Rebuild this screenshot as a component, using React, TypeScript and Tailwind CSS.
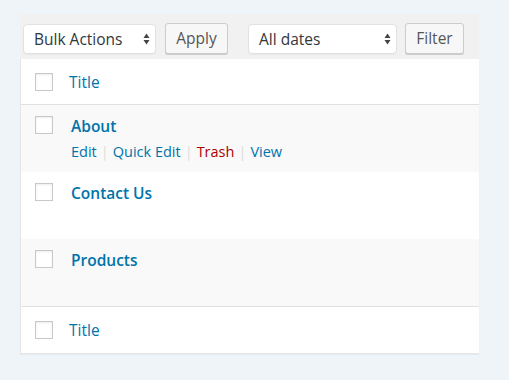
import React from "react";

const font = { fontFamily: '"Open Sans", "Noto Sans", sans-serif' };

function Arrows() {
  return (
    <svg width="7" height="12" viewBox="0 0 7 12" className="shrink-0">
      <path d="M3.5 0.5 L6.5 5 L0.5 5 Z" fill="#444" />
      <path d="M3.5 11.5 L6.5 7 L0.5 7 Z" fill="#444" />
    </svg>
  );
}

function Select({ label, w }: { label: string; w: string }) {
  return (
    <div
      className={`${w} h-[30px] flex items-center justify-between pl-[10px] pr-[5px] bg-white rounded-[4px] border border-[#e2e2e2] shadow-[0_1px_1px_rgba(0,0,0,0.04)] text-[15.5px] text-[#32373c]`}
    >
      <span className="leading-[20px]">{label}</span>
      <Arrows />
    </div>
  );
}

function Button({ label, w }: { label: string; w: string }) {
  return (
    <div
      className={`${w} h-[31px] -mt-[1px] flex items-center justify-center bg-[#f7f7f7] border border-[#cccccc] rounded-[3px] shadow-[0_1px_0_#cccccc] text-[15.5px] text-[#555]`}
    >
      {label}
    </div>
  );
}

function Checkbox() {
  return (
    <div className="w-[18px] h-[18px] shrink-0 bg-white border border-[#c5c8cc] shadow-[inset_0_1px_2px_rgba(0,0,0,0.08)]" />
  );
}

function HeadRow({ border }: { border: "b" | "t" }) {
  return (
    <div
      className={`h-[46px] flex items-center pl-[14px] bg-white ${
        border === "b" ? "border-b border-[#e1e1e1]" : ""
      }`}
    >
      <Checkbox />
      <span className="ml-[16px] text-[15.5px] leading-[20px] text-[#0073aa]">Title</span>
    </div>
  );
}

function Row({ title, alt, actions }: { title: string; alt: boolean; actions?: boolean }) {
  return (
    <div className={`h-[67px] flex items-start pl-[14px] ${alt ? "bg-[#f9f9f9]" : "bg-white"}`}>
      <div className="pt-[11px]">
        <Checkbox />
      </div>
      <div className="ml-[18px] pt-[11px] flex flex-col">
        <span className="text-[15.5px] leading-[20px] font-semibold text-[#0073aa]">{title}</span>
        {actions && (
          <div className="mt-[6px] flex items-center text-[14.5px] leading-[20px]">
            <span className="text-[#0073aa]">Edit</span>
            <span className="mx-[4px] text-[#dddddd]">|</span>
            <span className="text-[#0073aa]">Quick Edit</span>
            <span className="mx-[4px] text-[#dddddd]">|</span>
            <span className="text-[#a00]">Trash</span>
            <span className="mx-[4px] text-[#dddddd]">|</span>
            <span className="text-[#0073aa]">View</span>
          </div>
        )}
      </div>
    </div>
  );
}

export default function App() {
  return (
    <div className="w-[509px] h-[380px] bg-[#eff4f8] pt-[14px] pl-[20px]" style={font}>
      <div className="w-[459px]">
        <div className="h-[45px] bg-[#f1f1f1] flex items-start pt-[10px] pl-[3px]">
          <Select label="Bulk Actions" w="w-[133px]" />
          <div className="ml-[9px]">
            <Button label="Apply" w="w-[63px]" />
          </div>
          <div className="ml-[20px]">
            <Select label="All dates" w="w-[149px]" />
          </div>
          <div className="ml-[8px]">
            <Button label="Filter" w="w-[59px]" />
          </div>
        </div>
        <div className="border-l border-b border-[#e5e5e5] shadow-[0_1px_1px_rgba(0,0,0,0.04)]">
          <HeadRow border="b" />
          <Row title="About" alt={true} actions />
          <Row title="Contact Us" alt={false} />
          <div className="border-b border-[#e1e1e1]">
            <Row title="Products" alt={true} />
          </div>
          <HeadRow border="t" />
        </div>
      </div>
    </div>
  );
}
